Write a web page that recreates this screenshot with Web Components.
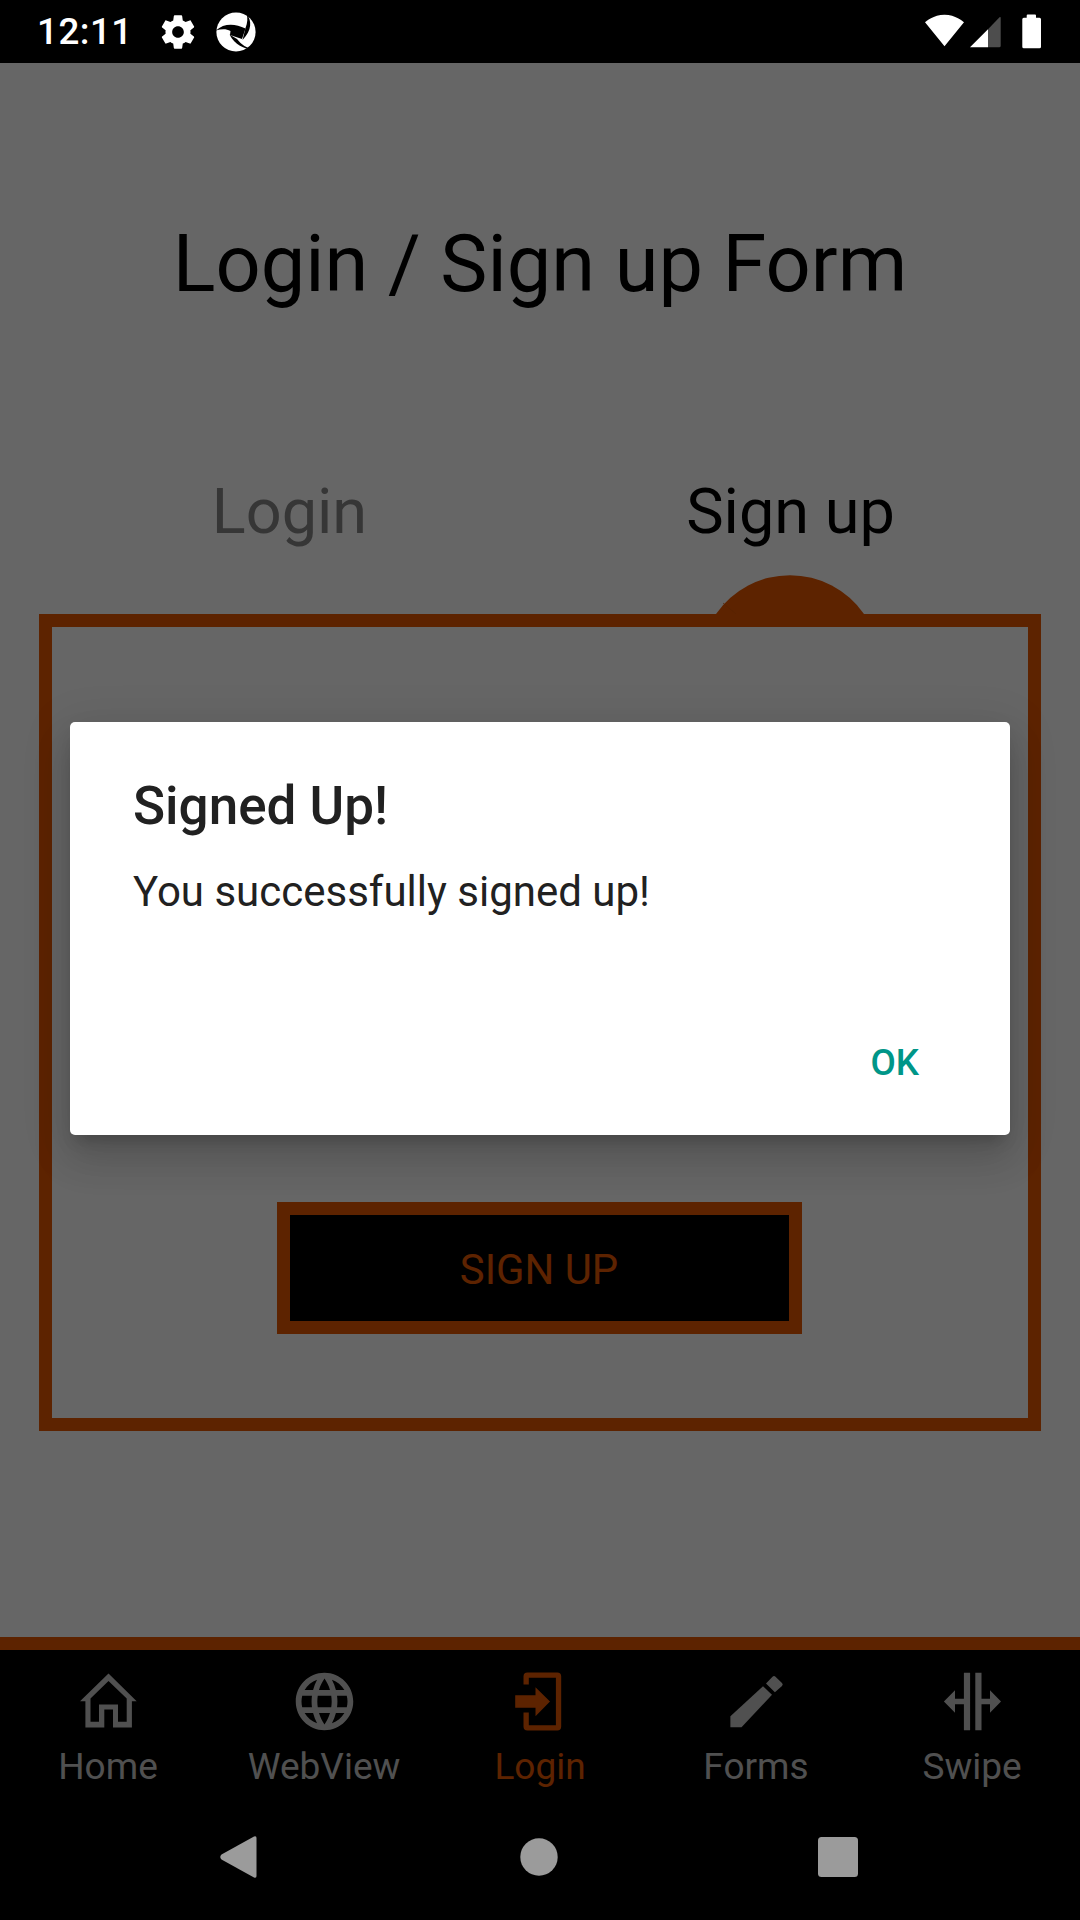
<!DOCTYPE html>
<html lang="en"><head><meta charset="utf-8"><title>Login / Sign up Form</title>
<style>
html,body{margin:0;padding:0;width:1080px;height:1920px;background:#000;overflow:hidden;font-family:Roboto,"Liberation Sans",sans-serif}
app-shell{width:1080px;height:1920px}
svg{display:block}
</style></head><body>
<app-shell>
  <status-bar slot="status"></status-bar>
  <login-screen slot="content"></login-screen>
  <bottom-tabs slot="tabs">
    <tab-item><svg slot="icon" width="69" height="69" viewBox="0 0 69 69" fill="currentColor"><path fill-rule="evenodd" d="M34.500 6.500 6 34.200h5.400V60.500H30.300V42.500H39V60.500H57.900V34.200H62.700ZM34.500 14 16.500 31.500V54.800H25V37.500H44V54.800H52.700V31.500Z"/></svg>Home</tab-item>
    <tab-item><svg slot="icon" width="69" height="69" viewBox="0 0 24 24" fill="currentColor"><path d="M11.990 2C6.470 2 2 6.480 2 12s4.470 10 9.990 10C17.520 22 22 17.520 22 12S17.520 2 11.990 2zm6.930 6h-2.950c-.32-1.250-.78-2.450-1.380-3.560 1.840.63 3.370 1.910 4.330 3.560zM12 4.040c.83 1.200 1.480 2.530 1.910 3.960h-3.820c.43-1.430 1.080-2.760 1.910-3.960zM4.260 14C4.100 13.360 4 12.690 4 12s.1-1.360.26-2h3.380c-.08.66-.14 1.320-.14 2 0 .68.06 1.340.14 2H4.260zm.82 2h2.950c.32 1.250.78 2.450 1.380 3.560-1.840-.63-3.370-1.900-4.330-3.560zm2.950-8H5.080c.96-1.660 2.490-2.930 4.330-3.560C8.810 5.550 8.350 6.750 8.030 8zM12 19.960c-.83-1.200-1.480-2.530-1.910-3.960h3.820c-.43 1.430-1.080 2.760-1.910 3.960zM14.340 14H9.660c-.09-.66-.16-1.320-.16-2 0-.68.07-1.350.16-2h4.680c.09.65.16 1.320.16 2 0 .68-.07 1.340-.16 2zm.25 5.560c.6-1.110 1.060-2.310 1.380-3.560h2.950c-.96 1.650-2.490 2.930-4.330 3.560zM16.360 14c.08-.66.14-1.320.14-2 0-.68-.06-1.340-.14-2h3.380c.16.64.26 1.310.26 2s-.1 1.360-.26 2h-3.380z"/></svg>WebView</tab-item>
    <tab-item active><svg slot="icon" width="69" height="69" viewBox="0 0 69 69" fill="currentColor"><path d="M17.500 17.500V9.500a4 4 0 0 1 4-4H51.200a4 4 0 0 1 4 4V59.500a4 4 0 0 1-4 4H21.500a4 4 0 0 1-4-4V45.500h5.300V58.200H49.900V10.800H22.800V17.500Z"/><path d="M9.200 28.200H29.500V20.200L44 34.500 29.500 49.200V40.800H9.200Z"/></svg>Login</tab-item>
    <tab-item><svg slot="icon" width="69" height="69" viewBox="0 0 69 69" fill="currentColor"><path d="M41 19.200 50 27.800 19.500 60.200H8.400V49.200Z"/><path d="M44 16.500 50.500 9.700q1.500-1.500 3 0L60 16q1.500 1.500 0 3L52.900 25.200Z"/></svg>Forms</tab-item>
    <tab-item><svg slot="icon" width="69" height="69" viewBox="0 0 69 69" fill="currentColor"><path d="M25.900 5.800h6.200V63.200h-6.200ZM37.300 5.800h6.200V63.200h-6.200ZM5.900 34.500 17 23.200V31.800h8.900v5.400H17V45.800ZM63 34.500 52 23.200V31.800H43.500v5.400H52V45.800Z"/></svg>Swipe</tab-item>
  </bottom-tabs>
  <alert-dialog slot="overlay">
    <span slot="title">Signed Up!</span>
    You successfully signed up!
    <span slot="action">OK</span>
  </alert-dialog>
  <system-nav slot="system"></system-nav>
</app-shell>
<script>
function def(name, html){
  customElements.define(name, class extends HTMLElement{
    constructor(){super();this.attachShadow({mode:'open'}).innerHTML=html;}
  });
}
def('app-shell',`<style>
:host{display:flex;flex-direction:column;background:#000}
.app{position:relative;flex:1;display:flex;flex-direction:column;min-height:0}
.content{flex:1;min-height:0;display:flex;flex-direction:column;background:#fff}
.scrim{position:absolute;inset:0;background:rgba(0,0,0,.6);display:flex;justify-content:center;align-items:flex-start;padding-top:659px;box-sizing:border-box}
</style>
<slot name="status"></slot>
<div class="app"><div class="content"><slot name="content"></slot></div><slot name="tabs"></slot>
<div class="scrim"><slot name="overlay"></slot></div></div>
<slot name="system"></slot>`);
def('status-bar',`<style>
:host{display:flex;align-items:center;height:63px;background:#000;color:#fff;flex:none;padding-left:37px;padding-right:39px;box-sizing:border-box}
.time{font:500 36.750px/63px Roboto,sans-serif;width:121px;letter-spacing:.5px;margin-top:-1px}
svg{display:block;flex:none}
.logo{margin-left:18px}
.sp{flex:1}
</style>
<span class="time">12:11</span>
<svg width="40" height="40" viewBox="0 0 24 24" fill="#fff"><path d="M19.430 12.980c.04-.32.07-.64.07-.98s-.03-.66-.07-.98l2.110-1.650c.19-.15.24-.42.12-.64l-2-3.460c-.12-.22-.39-.3-.61-.22l-2.490 1c-.52-.4-1.080-.73-1.690-.98l-.38-2.650C14.460 2.180 14.250 2 14 2h-4c-.25 0-.46.18-.49.42l-.38 2.650c-.61.25-1.170.59-1.690.98l-2.490-1c-.23-.09-.49 0-.61.22l-2 3.460c-.13.22-.07.49.12.64l2.110 1.650c-.04.32-.07.65-.07.98s.03.66.07.98l-2.110 1.650c-.19.15-.24.42-.12.64l2 3.460c.12.22.39.3.61.22l2.490-1c.52.4 1.080.73 1.690.98l.38 2.650c.03.24.24.42.49.42h4c.25 0 .46-.18.49-.42l.38-2.650c.61-.25 1.170-.59 1.690-.98l2.490 1c.23.09.49 0 .61-.22l2-3.460c.12-.22.07-.49-.12-.64l-2.110-1.650zM12 15.500c-1.930 0-3.500-1.570-3.500-3.500s1.570-3.500 3.500-3.500 3.500 1.570 3.500 3.500-1.570 3.500-3.500 3.500z"/></svg>
<svg class="logo" width="40" height="40" viewBox="0 0 40 40"><circle cx="20" cy="20" r="19.600" fill="#fff"/><path d="M0 18.500C8 11 19 11.500 29.500 16.500L26 27 14 23 14.500 19C10 16.500 5 17 0 18.500Z" fill="#000"/><path d="M30.500 1.500C36 9 36 18 26.500 28L29.500 16C31.500 11 32 6 30.500 1.500Z" fill="#000"/><path d="M37 37.500C28 37 19 33 13.500 22.500L21 27C25.500 33 31 36 37 37.500Z" fill="#000"/></svg>
<span class="sp"></span>
<svg width="118" height="40" viewBox="0 0 118 40"><path d="M21.500 34.200 41 10.200C40 9.500 32.500 2.800 21.500 2.800S3 9.500 2 10.200Z" fill="#fff"/><path d="M47 35.200 65 17.200V35.200Z" fill="#fff"/><path d="M65 17.200 76.500 5.300q1.200-1 1.200.7V33.700q0 1.500-1.500 1.500H65Z" fill="#4d4d4d"/><path d="M103.700 5.800V3.500q0-1 1-1H112q1 0 1 1V5.800h3.500q1.500 0 1.500 1.500V34.700q0 1.500-1.500 1.500H100.800q-1.500 0-1.500-1.500V7.300q0-1.500 1.500-1.500Z" fill="#fff"/></svg>`);
def('login-screen',`<style>
:host{display:flex;flex-direction:column;flex:1;color:#000;font-family:Roboto,sans-serif}
h1{margin:0;font:400 79.300px/92px Roboto,sans-serif;text-align:center;padding-top:155px;height:92px}
.tabs{display:flex;margin:165px 39px 0;height:139px;box-sizing:border-box}
.tab{flex:1;text-align:center;font:400 63px/74px Roboto,sans-serif;color:#888}
.tab.on{color:#000}
.bump{position:relative;height:0;margin:0 39px}
.bump svg{position:absolute;left:663px;top:-47px;display:block}
</style>
<h1>Login / Sign up Form</h1>
<div class="tabs"><div class="tab">Login</div><div class="tab on">Sign up</div></div>
<div class="bump"><svg width="176" height="60" viewBox="0 0 176 60"><path d="M14 47A90 90 0 0 1 162 47V60H14Z" fill="#e85800"/><path d="M21 36 34 47" stroke="#d85400" stroke-width=".7" fill="none"/></svg></div>
<signup-card></signup-card>`);
def('signup-card',`<style>
:host{display:flex;justify-content:center;align-items:flex-start;margin:0 39px;height:817px;box-sizing:border-box;border:13px solid #e85800;padding-top:575px;padding-right:2px;position:relative}
button{width:525px;height:132px;box-sizing:border-box;border:13px solid #e85800;background:#000;color:#e85800;font:400 41.800px/1 Roboto,sans-serif;margin:0;padding:4px 0 0;text-transform:uppercase}
</style><button>Sign up</button>`);
def('bottom-tabs',`<style>
:host{display:flex;flex:none;height:151px;box-sizing:border-box;border-top:13px solid #e85800;background:#000}
</style><slot></slot>`);
def('tab-item',`<style>
:host{flex:1;display:flex;flex-direction:column;align-items:center;color:#c8c8c8;font:400 37px/42px Roboto,sans-serif;padding-top:17px;box-sizing:border-box}
:host([active]){color:#e85800}
.i{height:69px;margin-bottom:10px}
</style><div class="i"><slot name="icon"></slot></div><div><slot></slot></div>`);
def('alert-dialog',`<style>
:host{display:flex;flex-direction:column;width:940px;height:413px;box-sizing:border-box;background:#fff;border-radius:5px;padding:53px 63px 0;color:#212121;font:400 42px/52px Roboto,sans-serif;box-shadow:0 24px 38px 3px rgba(0,0,0,.11),0 9px 46px 8px rgba(0,0,0,.09),0 11px 15px -7px rgba(0,0,0,.2)}
.t{font:500 53px/62px Roboto,sans-serif;margin-bottom:29px}
.a{margin-top:auto;display:flex;justify-content:flex-end;color:#009688;font:500 36.750px/43px Roboto,sans-serif;padding:0 28px 51px 0;}
</style><div class="t"><slot name="title"></slot></div><div><slot></slot></div><div class="a"><slot name="action"></slot></div>`);
def('system-nav',`<style>
:host{display:flex;align-items:center;justify-content:center;height:132px;flex:none;background:#000;box-sizing:border-box;padding-top:6px;padding-right:2px}
.r{display:flex;width:638px;justify-content:space-between;align-items:center}
</style><div class="r">
<svg width="40" height="44" viewBox="0 0 40 44" fill="#9b9b9b"><path d="M1.500 19.500 34 1.500q2.500-1 2.500 1.500V41q0 2.500-2.500 1.500L1.500 24.500q-2.500-2.500 0-5Z"/></svg>
<svg width="38" height="38" viewBox="0 0 38 38"><circle cx="19" cy="19" r="18.700" fill="#9b9b9b"/></svg>
<svg width="40" height="40" viewBox="0 0 40 40"><rect width="40" height="40" rx="3.500" fill="#9b9b9b"/></svg>
</div>`);
</script>
</body></html>
